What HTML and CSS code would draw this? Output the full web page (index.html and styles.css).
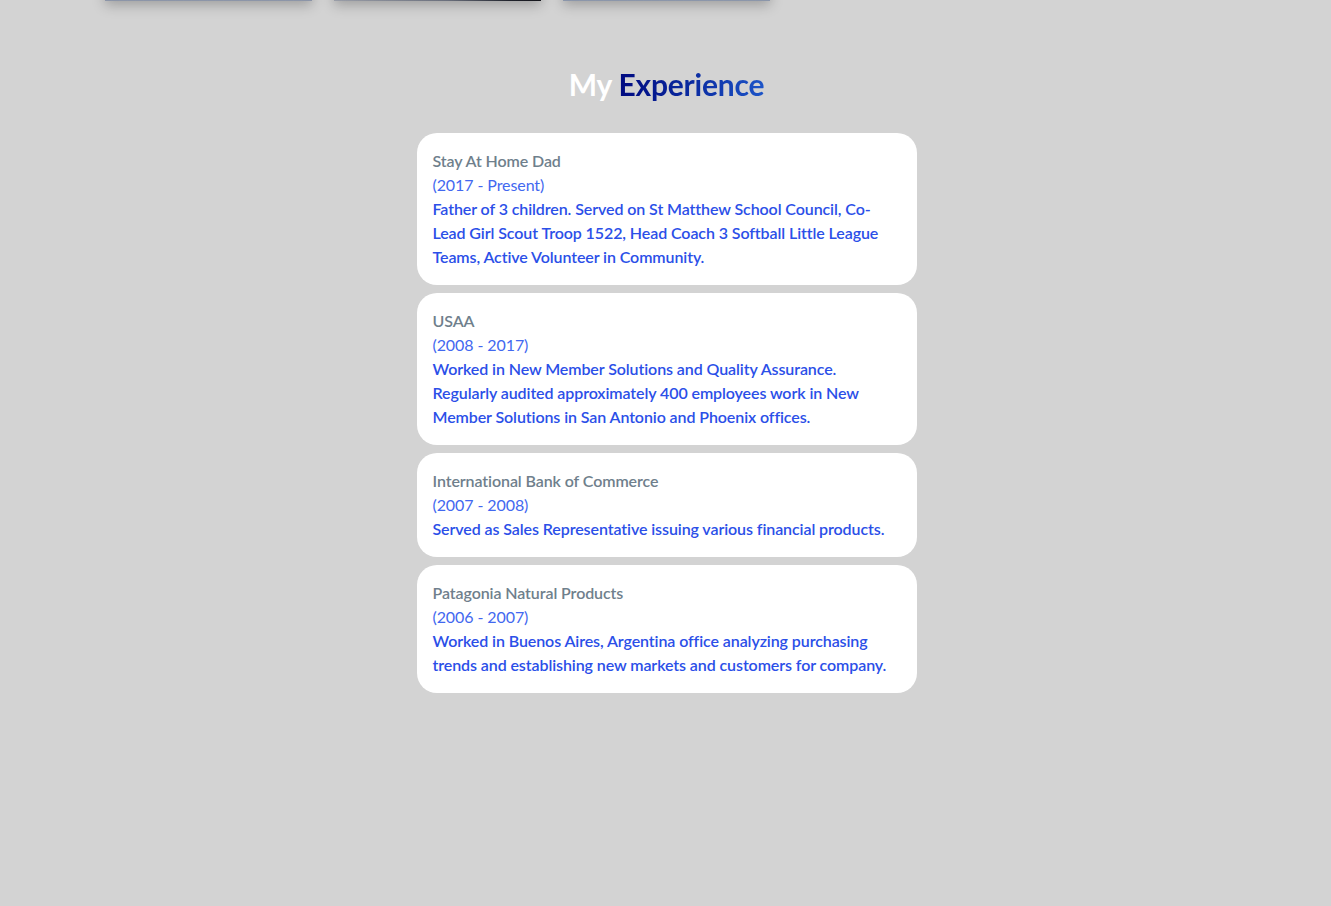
FILE: index.html
```html
<!DOCTYPE html>
<html lang="en">
<head>
<meta charset="utf-8">
<title>My Experience</title>
<link rel="stylesheet" href="styles.css">
</head>
<body>
<div class="projects">
  <div class="project p1"></div>
  <div class="project p2"></div>
  <div class="project p3"></div>
</div>
<section class="experience">
  <h2 class="title"><span class="my">My</span> <span class="exp">Experience</span></h2>
  <div class="list">
    <div class="card">
      <div class="company">Stay At Home Dad</div>
      <div class="years">(2017 - Present)</div>
      <div class="desc">Father of 3 children. Served on St Matthew School Council, Co-Lead Girl Scout Troop 1522, Head Coach 3 Softball Little League Teams, Active Volunteer in Community.</div>
    </div>
    <div class="card">
      <div class="company">USAA</div>
      <div class="years">(2008 - 2017)</div>
      <div class="desc">Worked in New Member Solutions and Quality Assurance. Regularly audited approximately 400 employees work in New Member Solutions in San Antonio and Phoenix offices.</div>
    </div>
    <div class="card">
      <div class="company">International Bank of Commerce</div>
      <div class="years">(2007 - 2008)</div>
      <div class="desc">Served as Sales Representative issuing various financial products.</div>
    </div>
    <div class="card">
      <div class="company">Patagonia Natural Products</div>
      <div class="years">(2006 - 2007)</div>
      <div class="desc">Worked in Buenos Aires, Argentina office analyzing purchasing trends and establishing new markets and customers for company.</div>
    </div>
  </div>
</section>
</body>
</html>
```
FILE: styles.css
```css
html, body {
  margin: 0;
  padding: 0;
}
body {
  background: #d3d3d3;
  font-family: Lato, "Open Sans", sans-serif;
  height: 906px;
  overflow: hidden;
}
.projects {
  display: flex;
  gap: 22px;
  padding-left: 105px;
  margin-top: -199px;
}
.project {
  width: 207px;
  height: 200px;
  box-shadow: 0 4px 12px rgba(0, 0, 0, 0.25);
}
.p1 { background: linear-gradient(#a0a8b8, #8c95a8); }
.p2 { background: linear-gradient(90deg, #9a9ea8 0%, #6a6f7c 55%, #20232c 85%, #15161c 100%); }
.p3 { background: linear-gradient(#a0a8b8, #8b96aa); }
.experience {
  display: flex;
  flex-direction: column;
  align-items: center;
  padding-left: 2px;
}
.title {
  margin: 61px 0 27px;
  font-size: 30px;
  font-weight: 700;
  line-height: 44px;
  letter-spacing: -0.2px;
}
.my {
  color: #ffffff;
}
.exp {
  background: linear-gradient(90deg, #000a80 0%, #0a2aa0 50%, #1d55c8 100%);
  -webkit-background-clip: text;
  background-clip: text;
  color: transparent;
}
.list {
  display: flex;
  flex-direction: column;
  gap: 8px;
  width: 500px;
}
.card {
  background: #ffffff;
  border-radius: 20px;
  padding: 16px 16px 16px 16px;
  font-size: 16px;
  line-height: 24px;
  letter-spacing: -0.09px;
}
.company {
  color: #6f7f8c;
  font-weight: 600;
}
.years {
  color: #4268f0;
}
.desc {
  color: #2b4fe8;
  font-weight: 600;
}
```
